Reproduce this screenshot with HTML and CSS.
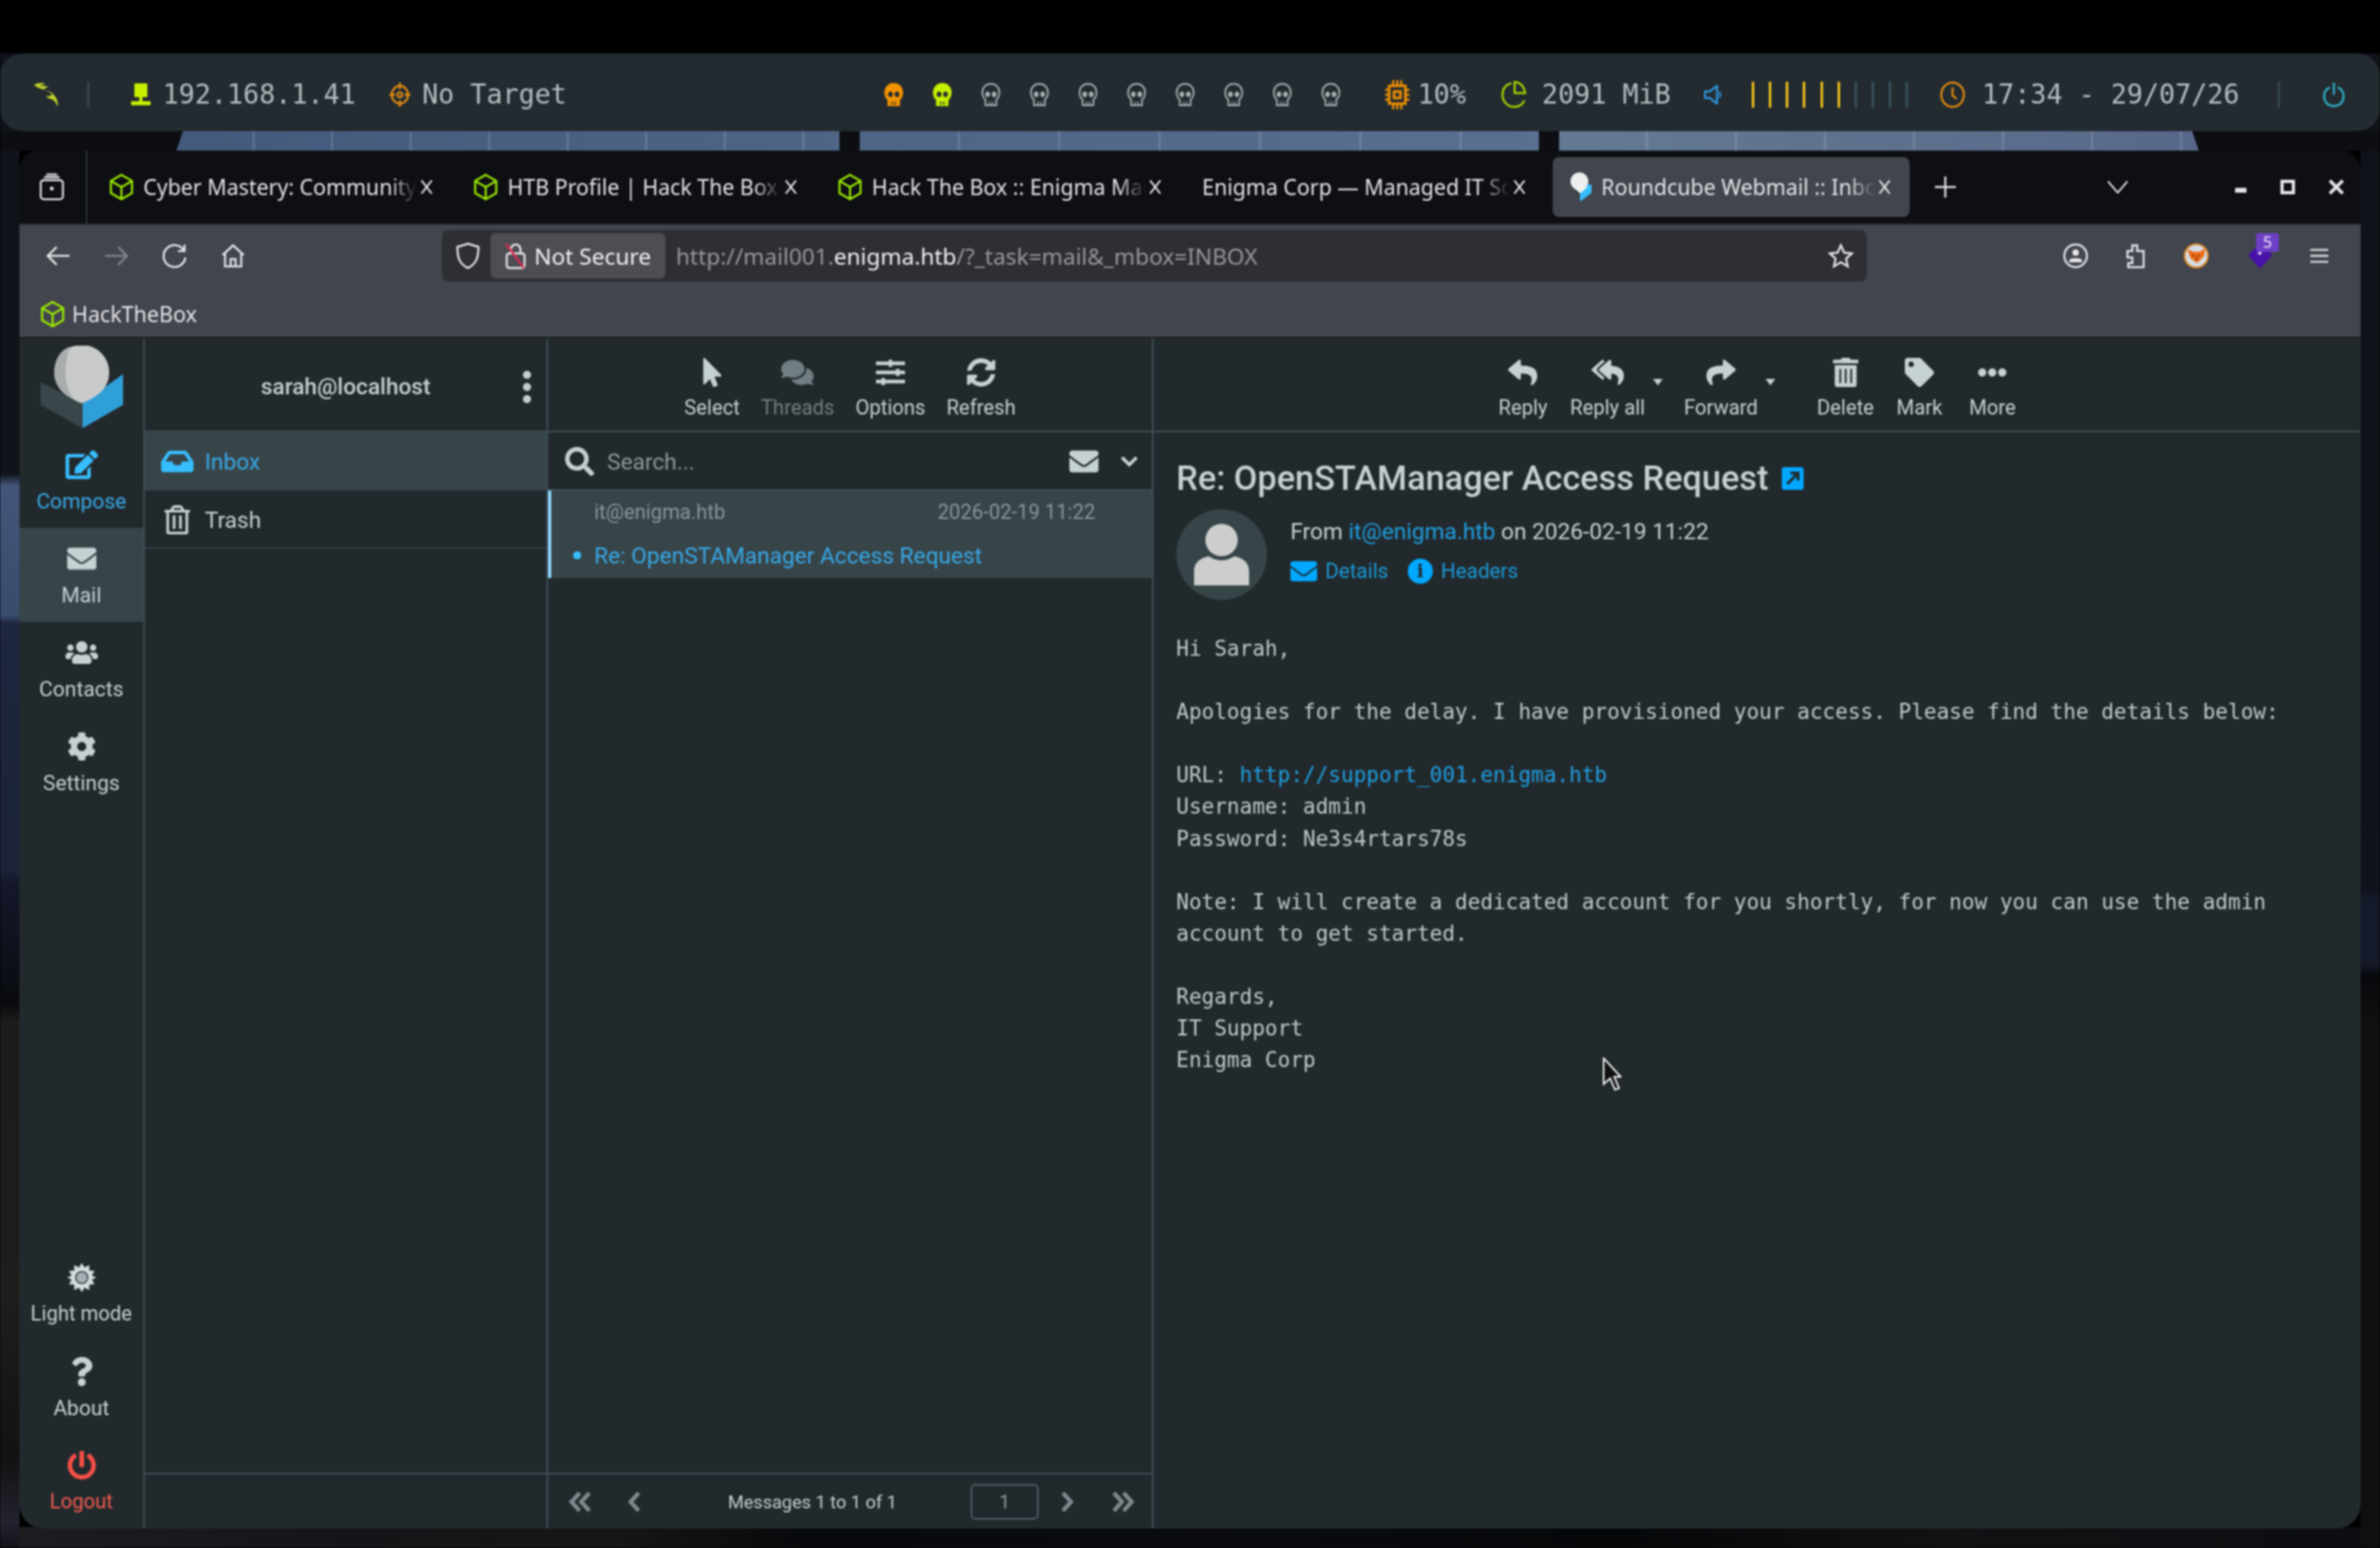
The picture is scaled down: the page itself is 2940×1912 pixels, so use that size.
FILE: index.html
```html
<!DOCTYPE html>
<html lang="en">
<head>
    <meta charset="UTF-8">
    <title>Roundcube Webmail :: Inbox</title>
    <link rel="stylesheet" href="styles.css">
</head>
<body>

<svg class="sprite" xmlns="http://www.w3.org/2000/svg">
    <symbol id="i-envelope" viewBox="0 0 512 512"><path d="M502.3 190.8c3.9-3.1 9.7-.2 9.7 4.7V400c0 26.5-21.5 48-48 48H48c-26.5 0-48-21.5-48-48V195.6c0-5 5.7-7.8 9.7-4.7 22.4 17.4 52.1 39.5 154.1 113.6 21.1 15.4 56.7 47.8 92.2 47.6 35.7.3 72-32.8 92.3-47.6 102-74.1 131.6-96.3 154-113.7zM256 320c23.2.4 56.6-29.2 73.4-41.4 132.7-96.3 142.8-104.7 173.4-128.7 5.8-4.5 9.2-11.5 9.2-18.9v-19c0-26.5-21.5-48-48-48H48C21.5 64 0 85.5 0 112v19c0 7.4 3.4 14.3 9.2 18.9 30.6 23.9 40.7 32.4 173.4 128.7 16.8 12.2 50.2 41.8 73.4 41.4z"/></symbol>
    <symbol id="i-cog" viewBox="0 0 512 512"><path d="M487.4 315.7l-42.6-24.6c4.3-23.2 4.3-47 0-70.2l42.6-24.6c4.9-2.8 7.1-8.6 5.5-14-11.1-35.6-30-67.8-54.7-94.6-3.8-4.1-10-5.1-14.8-2.3L380.8 110c-17.9-15.4-38.5-27.3-60.8-35.1V25.8c0-5.6-3.9-10.5-9.4-11.7-36.7-8.2-74.3-7.8-109.2 0-5.5 1.2-9.4 6.1-9.4 11.7V75c-22.2 7.9-42.8 19.8-60.8 35.1L88.7 85.5c-4.9-2.8-11-1.9-14.8 2.3-24.7 26.7-43.6 58.9-54.7 94.6-1.7 5.4.6 11.2 5.5 14L67.3 221c-4.3 23.2-4.3 47 0 70.2l-42.6 24.6c-4.9 2.8-7.1 8.6-5.5 14 11.1 35.6 30 67.8 54.7 94.6 3.8 4.1 10 5.1 14.8 2.3l42.6-24.6c17.9 15.4 38.5 27.3 60.8 35.1v49.2c0 5.6 3.9 10.5 9.4 11.7 36.7 8.2 74.3 7.8 109.2 0 5.5-1.2 9.4-6.1 9.4-11.7v-49.2c22.2-7.9 42.8-19.8 60.8-35.1l42.6 24.6c4.9 2.8 11 1.9 14.8-2.3 24.7-26.7 43.6-58.9 54.7-94.6 1.5-5.5-.7-11.3-5.6-14.1zM256 336c-44.1 0-80-35.9-80-80s35.9-80 80-80 80 35.9 80 80-35.9 80-80 80z"/></symbol>
    <symbol id="i-reply" viewBox="0 0 512 512"><path d="M8.309 189.836L184.313 37.851C199.719 24.546 224 35.347 224 56.015v80.053c160.629 1.839 288 34.032 288 186.258 0 61.441-39.581 122.309-83.333 154.132-13.653 9.931-33.111-2.533-28.077-18.631 45.344-145.012-21.507-183.51-176.59-185.742V360c0 20.7-24.3 31.453-39.687 18.164l-176.004-152c-11.071-9.562-11.086-26.753 0-36.328z"/></symbol>
    <symbol id="i-replyall" viewBox="0 0 576 512"><path d="M136.309 189.836L312.313 37.851C327.72 24.546 352 35.348 352 56.015v82.763c129.182 10.231 224 52.212 224 183.548 0 61.441-39.582 122.309-83.333 154.132-13.653 9.931-33.111-2.533-28.077-18.631 38.512-123.162-3.922-169.482-112.59-182.015v84.175c0 20.701-24.3 31.453-39.687 18.164L136.309 226.164c-11.071-9.561-11.086-26.753 0-36.328zm-128 36.328L184.313 378.15C199.7 391.439 224 380.687 224 359.986v-15.818l-108.606-93.785A55.96 55.96 0 0 1 96 207.998a55.953 55.953 0 0 1 19.393-42.38L224 71.832V56.015c0-20.667-24.28-31.469-39.687-18.164L8.309 189.836c-11.086 9.575-11.071 26.767 0 36.328z"/></symbol>
    <symbol id="i-forward" viewBox="0 0 512 512"><path d="M503.691 189.836L327.687 37.851C312.281 24.546 288 35.347 288 56.015v80.053C127.371 137.907 0 170.1 0 322.326c0 61.441 39.581 122.309 83.333 154.132 13.653 9.931 33.111-2.533 28.077-18.631C66.066 312.814 132.917 274.316 288 272.085V360c0 20.7 24.3 31.453 39.687 18.164l176.004-152c11.071-9.562 11.086-26.753 0-36.328z"/></symbol>
    <symbol id="i-trash" viewBox="0 0 448 512"><path d="M32 464a48 48 0 0 0 48 48h288a48 48 0 0 0 48-48V128H32zm272-256a16 16 0 0 1 32 0v224a16 16 0 0 1-32 0zm-96 0a16 16 0 0 1 32 0v224a16 16 0 0 1-32 0zm-96 0a16 16 0 0 1 32 0v224a16 16 0 0 1-32 0zM432 32H312l-9.4-18.7A24 24 0 0 0 281.1 0H166.8a23.72 23.72 0 0 0-21.4 13.3L136 32H16A16 16 0 0 0 0 48v32a16 16 0 0 0 16 16h416a16 16 0 0 0 16-16V48a16 16 0 0 0-16-16z"/></symbol>
    <symbol id="i-trash-line" viewBox="0 0 448 512"><path d="M268 416h24a12 12 0 0 0 12-12V188a12 12 0 0 0-12-12h-24a12 12 0 0 0-12 12v216a12 12 0 0 0 12 12zM432 80h-82.4l-34-56.7A48 48 0 0 0 274.4 0H173.6a48 48 0 0 0-41.2 23.3L98.4 80H16A16 16 0 0 0 0 96v16a16 16 0 0 0 16 16h16v336a48 48 0 0 0 48 48h288a48 48 0 0 0 48-48V128h16a16 16 0 0 0 16-16V96a16 16 0 0 0-16-16zM171.8 50.9A6 6 0 0 1 177 48h94a6 6 0 0 1 5.1 2.9L293.6 80H154.4zM368 464H80V128h288zm-212-48h24a12 12 0 0 0 12-12V188a12 12 0 0 0-12-12h-24a12 12 0 0 0-12 12v216a12 12 0 0 0 12 12z"/></symbol>
    <symbol id="i-tag" viewBox="0 0 512 512"><path d="M0 252.118V48C0 21.49 21.49 0 48 0h204.118a48 48 0 0 1 33.941 14.059l211.882 211.882c18.745 18.745 18.745 49.137 0 67.882L293.823 497.941c-18.745 18.745-49.137 18.745-67.882 0L14.059 286.059A48 48 0 0 1 0 252.118zM112 64c-26.51 0-48 21.49-48 48s21.49 48 48 48 48-21.49 48-48-21.49-48-48-48z"/></symbol>
    <symbol id="i-ellipsis" viewBox="0 0 512 512"><path d="M328 256c0 39.8-32.2 72-72 72s-72-32.2-72-72 32.2-72 72-72 72 32.2 72 72zm104-72c-39.8 0-72 32.2-72 72s32.2 72 72 72 72-32.2 72-72-32.2-72-72-72zm-352 0c-39.8 0-72 32.2-72 72s32.2 72 72 72 72-32.2 72-72-32.2-72-72-72z"/></symbol>
    <symbol id="i-pointer" viewBox="0 0 320 512"><path d="M302.189 329.126H196.105l55.831 135.993c3.889 9.428-.555 19.999-9.444 23.999l-49.165 21.427c-9.165 4-19.443-.571-23.332-9.714l-53.053-129.136-86.664 89.138C18.729 472.71 0 463.554 0 447.977V18.299C0 1.899 19.921-6.096 30.277 5.443l284.412 292.542c11.472 11.179 3.007 31.141-12.5 31.141z"/></symbol>
    <symbol id="i-comments" viewBox="0 0 576 512"><path d="M416 192c0-88.4-93.1-160-208-160S0 103.6 0 192c0 34.3 14.1 65.9 38 92-13.4 30.2-35.5 54.2-35.8 54.5-2.2 2.3-2.8 5.7-1.5 8.7S4.8 352 8 352c36.6 0 66.9-12.3 88.7-25 32.2 15.7 70.3 25 111.3 25 114.9 0 208-71.6 208-160zm122 220c23.9-26 38-57.7 38-92 0-66.9-53.5-124.2-129.3-148.1.9 6.6 1.3 13.3 1.3 20.1 0 105.9-107.7 192-240 192-10.8 0-21.3-.8-31.7-1.9C207.8 439.6 281.8 480 368 480c41 0 79.1-9.2 111.3-25 21.8 12.7 52.1 25 88.7 25 3.2 0 6.1-1.9 7.3-4.8 1.3-2.9.7-6.3-1.5-8.7-.3-.3-22.4-24.2-35.8-54.5z"/></symbol>
    <symbol id="i-sliders" viewBox="0 0 512 512"><path d="M496 384H160v-16c0-8.8-7.2-16-16-16h-32c-8.8 0-16 7.2-16 16v16H16c-8.8 0-16 7.2-16 16v32c0 8.8 7.2 16 16 16h80v16c0 8.8 7.2 16 16 16h32c8.8 0 16-7.2 16-16v-16h336c8.8 0 16-7.2 16-16v-32c0-8.8-7.2-16-16-16zm0-160h-80v-16c0-8.8-7.2-16-16-16h-32c-8.8 0-16 7.2-16 16v16H16c-8.8 0-16 7.2-16 16v32c0 8.8 7.2 16 16 16h336v16c0 8.8 7.2 16 16 16h32c8.8 0 16-7.2 16-16v-16h80c8.8 0 16-7.2 16-16v-32c0-8.8-7.2-16-16-16zm0-160H288V48c0-8.8-7.2-16-16-16h-32c-8.8 0-16 7.2-16 16v16H16C7.2 64 0 71.2 0 80v32c0 8.8 7.2 16 16 16h208v16c0 8.8 7.2 16 16 16h32c8.8 0 16-7.2 16-16v-16h208c8.8 0 16-7.2 16-16V80c0-8.8-7.2-16-16-16z"/></symbol>
    <symbol id="i-sync" viewBox="0 0 512 512"><path d="M370.72 133.28C339.458 104.008 298.888 87.962 255.848 88c-77.458.068-144.328 53.178-162.791 126.85-1.344 5.363-6.122 9.15-11.651 9.15H24.103c-7.498 0-13.194-6.807-11.807-14.176C33.933 94.924 134.813 8 256 8c66.448 0 126.791 26.136 171.315 68.685L463.03 40.97C478.149 25.851 504 36.559 504 57.941V192c0 13.255-10.745 24-24 24H345.941c-21.382 0-32.09-25.851-16.971-40.971l41.75-41.749zM32 296h134.059c21.382 0 32.09 25.851 16.971 40.971l-41.75 41.75c31.262 29.273 71.835 45.319 114.876 45.28 77.418-.07 144.315-53.144 162.787-126.849 1.344-5.363 6.122-9.15 11.651-9.15h57.304c7.498 0 13.194 6.807 11.807 14.176C478.067 417.076 377.187 504 256 504c-66.448 0-126.791-26.136-171.315-68.685L48.97 471.03C33.851 486.149 8 475.441 8 454.059V320c0-13.255 10.745-24 24-24z"/></symbol>
    <symbol id="i-search" viewBox="0 0 512 512"><path d="M505 442.7L405.3 343c-4.5-4.5-10.6-7-17-7H372c27.6-35.3 44-79.7 44-128C416 93.1 322.9 0 208 0S0 93.1 0 208s93.1 208 208 208c48.3 0 92.7-16.4 128-44v16.3c0 6.4 2.5 12.5 7 17l99.7 99.7c9.4 9.4 24.6 9.4 33.9 0l28.3-28.3c9.4-9.4 9.4-24.6.1-34zM208 336c-70.7 0-128-57.2-128-128 0-70.7 57.2-128 128-128 70.7 0 128 57.2 128 128 0 70.7-57.2 128-128 128z"/></symbol>
    <symbol id="i-users" viewBox="0 0 640 512"><path d="M96 224c35.3 0 64-28.7 64-64s-28.7-64-64-64-64 28.7-64 64 28.7 64 64 64zm448 0c35.3 0 64-28.7 64-64s-28.7-64-64-64-64 28.7-64 64 28.7 64 64 64zm32 32h-64c-17.6 0-33.5 7.1-45.1 18.6 40.3 22.1 68.9 62 75.1 109.4h66c17.7 0 32-14.3 32-32v-32c0-35.3-28.7-64-64-64zm-256 0c61.9 0 112-50.1 112-112S381.9 32 320 32 208 82.1 208 144s50.1 112 112 112zm76.8 32h-8.3c-20.8 10-43.9 16-68.5 16s-47.6-6-68.5-16h-8.3C179.6 288 128 339.6 128 403.2V432c0 26.5 21.5 48 48 48h288c26.5 0 48-21.5 48-48v-28.8c0-63.6-51.6-115.2-115.2-115.2zm-223.7-13.4C161.5 263.1 145.6 256 128 256H64c-35.3 0-64 28.7-64 64v32c0 17.7 14.3 32 32 32h65.9c6.3-47.4 34.9-87.3 75.2-109.4z"/></symbol>
    <symbol id="i-edit" viewBox="0 0 576 512"><path d="M402.6 83.2l90.2 90.2c3.8 3.8 3.8 10 0 13.8L274.4 405.6l-92.8 10.3c-12.4 1.4-22.9-9.1-21.5-21.5l10.3-92.8L388.8 83.2c3.8-3.8 10-3.8 13.8 0zm162-22.9l-48.8-48.8c-15.2-15.2-39.9-15.2-55.2 0l-35.4 35.4c-3.8 3.8-3.8 10 0 13.8l90.2 90.2c3.8 3.8 10 3.8 13.8 0l35.4-35.4c15.2-15.3 15.2-40 0-55.2zM384 346.2V448H64V128h231.8c3.2 0 6.2-1.3 8.5-3.5l40-40c7.6-7.6 2.2-20.5-8.5-20.5H48C21.5 64 0 85.5 0 112v352c0 26.5 21.5 48 48 48h352c26.5 0 48-21.5 48-48V306.2c0-10.7-12.9-16-20.5-8.5l-40 40c-2.2 2.3-3.5 5.3-3.5 8.5z"/></symbol>
    <symbol id="i-inbox" viewBox="0 0 576 512"><path d="M567.938 243.908L462.25 85.374A48.003 48.003 0 0 0 422.311 64H153.689a48 48 0 0 0-39.938 21.374L8.062 243.908A47.994 47.994 0 0 0 0 270.533V400c0 26.51 21.49 48 48 48h480c26.51 0 48-21.49 48-48V270.533a47.994 47.994 0 0 0-8.062-26.625zM162.252 128h251.497l85.333 128H376l-32 64H232l-32-64H76.918l85.334-128z"/></symbol>
    <symbol id="i-power" viewBox="0 0 512 512"><path d="M400 54.1c63 45 104 118.6 104 201.9 0 136.8-110.8 247.7-247.5 248C120 504.3 8.2 393 8 256.4 7.9 173.1 48.9 99.3 111.8 54.2c11.7-8.3 28-4.8 35 7.7L162.6 90c5.9 10.5 3.1 23.8-6.6 31-41.5 30.8-68 79.6-68 134.9-.1 92.3 74.5 168.1 168 168.1 91.6 0 168.6-74.2 168-169.1-.3-51.8-24.7-101.8-68.1-134-9.7-7.2-12.4-20.5-6.5-30.9l15.8-28.1c7-12.4 23.2-16.1 34.8-7.8zM296 264V24c0-13.3-10.7-24-24-24h-32c-13.3 0-24 10.7-24 24v240c0 13.3 10.7 24 24 24h32c13.3 0 24-10.7 24-24z"/></symbol>
    <symbol id="i-question" viewBox="0 0 384 512"><path d="M202.021 0C122.202 0 70.503 32.703 29.914 91.026c-7.363 10.58-5.093 25.086 5.178 32.874l43.138 32.709c10.373 7.865 25.132 6.026 33.253-4.148 25.049-31.381 43.63-49.449 82.757-49.449 30.764 0 68.816 19.799 68.816 49.631 0 22.552-18.617 34.134-48.993 51.164-35.423 19.86-82.299 44.576-82.299 106.405V320c0 13.255 10.745 24 24 24h72.471c13.255 0 24-10.745 24-24v-5.773c0-42.86 125.268-44.645 125.268-160.627C377.504 66.256 286.902 0 202.021 0zM192 373.459c-38.196 0-69.271 31.075-69.271 69.271 0 38.195 31.075 69.27 69.271 69.27s69.271-31.075 69.271-69.271-31.075-69.27-69.271-69.27z"/></symbol>
    <symbol id="i-sun" viewBox="0 0 40 40"><path d="M20 0l3.800 6 6.700-3.100-.3 7.300 7.300.7-3.500 6.400L40 20l-6 2.700 3.500 6.400-7.300.7.300 7.300-6.700-3.100L20 40l-3.800-6-6.700 3.100.3-7.300-7.300-.7L6 22.700 0 20l6-2.700-3.500-6.400 7.300-.7-.3-7.300 6.700 3.100z" fill="#d3dcde"/><circle cx="20" cy="20" r="9" fill="#22292c"/><circle cx="20" cy="20" r="7.500" fill="#a5b1b5"/></symbol>
    <symbol id="i-skull" viewBox="0 0 24 30"><path d="M12 1.500C5.600 1.500 1.500 6 1.500 12.500c0 3.800 1.400 6.600 3.800 8.600v6.900h13.400v-6.900c2.400-2 3.800-4.800 3.800-8.600C22.500 6 18.400 1.500 12 1.500z"/><ellipse class="skull-eye" cx="8" cy="14.500" rx="2.500" ry="3"/><ellipse class="skull-eye" cx="16" cy="14.500" rx="2.500" ry="3"/><path class="skull-eye" d="M9.500 23.500v4M12 23.500v4M14.500 23.500v4"/></symbol>
    <symbol id="i-cube" viewBox="0 0 30 34"><path d="M15 2l13 7.500v15L15 32 2 24.500v-15zM2 9.500l13 7.500 13-7.500M15 17v15"/></symbol>
    <symbol id="i-close" viewBox="0 0 20 24"><path d="M3 3l14 18M17 3L3 21"/></symbol>
</svg>

<div class="screen">
    <div class="panel">
        <svg class="dragon" viewBox="0 0 36 30"><path d="M0 3c5-3 10-3 14-1-3 0-5 1-7 3 4-2 8-1 11 1-3 0-5 1-6 3 5 0 10 3 13 7 3 3 4 6 4 8 0 2 1 4 0 6-1-4-3-7-6-9-3-1-7-2-8-5 3 1 6 1 7-1-2-3-5-5-9-6-5-1-9-3-13-6z"/></svg>
        <span class="bar-sep"></span>
        <svg class="panel-ic host-ic" viewBox="0 0 24 28"><path d="M4 0h16v17H4zM10 17h4v5h-4zM0 22h24v5H0z"/></svg>
        <span class="bar-text">192.168.1.41</span>
        <svg class="panel-ic target-ic" viewBox="0 0 26 30"><g fill="none" stroke="currentColor" stroke-width="2.500"><ellipse cx="13" cy="15" rx="10" ry="11"/><circle cx="13" cy="15" r="3"/><path d="M13 0v8M13 22v8M0 15h7M19 15h7"/></g></svg>
        <span class="bar-text">No Target</span>

        <div class="skulls">
            <svg class="skull skull-orange"><use href="#i-skull"/></svg>
            <svg class="skull skull-lime"><use href="#i-skull"/></svg>
            <svg class="skull"><use href="#i-skull"/></svg>
            <svg class="skull"><use href="#i-skull"/></svg>
            <svg class="skull"><use href="#i-skull"/></svg>
            <svg class="skull"><use href="#i-skull"/></svg>
            <svg class="skull"><use href="#i-skull"/></svg>
            <svg class="skull"><use href="#i-skull"/></svg>
            <svg class="skull"><use href="#i-skull"/></svg>
            <svg class="skull"><use href="#i-skull"/></svg>
        </div>

        <svg class="panel-ic cpu-ic" viewBox="0 0 30 36"><g fill="none" stroke="currentColor"><rect x="5" y="7" width="20" height="22" stroke-width="3"/><rect x="11" y="14" width="8" height="8" stroke-width="3"/><path d="M10 0v7M15 0v7M20 0v7M10 29v7M15 29v7M20 29v7M0 12h5M0 18h5M0 24h5M25 12h5M25 18h5M25 24h5" stroke-width="2.500"/></g></svg>
        <span class="bar-text">10%</span>
        <svg class="panel-ic mem-ic" viewBox="0 0 32 34"><g fill="none" stroke="currentColor" stroke-width="2.500"><path d="M13 3C6 4 2 10 2 17c0 8 6 15 14 15 6 0 11-3 13-8"/><path d="M17 1c7 1 12 6 13 14H17z"/></g></svg>
        <span class="bar-text">2091 MiB</span>
        <svg class="panel-ic vol-ic" viewBox="0 0 22 24"><path d="M1 8h6l9-7v22l-9-7H1z" fill="none" stroke="currentColor" stroke-width="2.500"/><path d="M19 8c1.500 3 1.500 5 0 8" fill="none" stroke="currentColor" stroke-width="2"/></svg>
        <div class="vol-bars">
            <span class="vbar on"></span><span class="vbar on"></span><span class="vbar on"></span>
            <span class="vbar on"></span><span class="vbar on"></span><span class="vbar on"></span>
            <span class="vbar"></span><span class="vbar"></span><span class="vbar"></span><span class="vbar"></span>
        </div>
        <svg class="panel-ic clock-ic" viewBox="0 0 32 34"><g fill="none" stroke="currentColor" stroke-width="2.500"><ellipse cx="16" cy="17" rx="14" ry="15"/><path d="M16 8v10l5 4"/></g></svg>
        <span class="bar-text">17:34 - 29/07/26</span>
        <span class="bar-sep sep-right"></span>
        <svg class="panel-ic power-ic" viewBox="0 0 28 32"><g fill="none" stroke="currentColor" stroke-width="2.500"><path d="M9 7C4 9 2 13 2 18c0 7 5 12 12 12s12-5 12-12c0-5-2-9-7-11"/><path d="M14 1v15"/></g></svg>
    </div>

    <div class="band">
        <span class="band-seg band-first"></span>
        <span class="band-seg band-mid"></span>
        <span class="band-seg band-last"></span>
    </div>

    <div class="browser">
        <div class="tabbar">
            <div class="tab-all">
                <svg class="tab-all-ic" viewBox="0 0 32 36"><g fill="none" stroke="#e6e6e8" stroke-width="2.500"><rect x="1.500" y="9" width="29" height="25" rx="4"/><path d="M6 5h20M9 1.500h14"/></g><circle cx="16" cy="20" r="2.500" fill="#e6e6e8"/></svg>
            </div>
            <div class="tab">
                <svg class="tab-cube"><use href="#i-cube"/></svg>
                <span class="tab-title">Cyber Mastery: Community</span>
                <svg class="tab-x"><use href="#i-close"/></svg>
            </div>
            <div class="tab">
                <svg class="tab-cube"><use href="#i-cube"/></svg>
                <span class="tab-title">HTB Profile | Hack The Box</span>
                <svg class="tab-x"><use href="#i-close"/></svg>
            </div>
            <div class="tab">
                <svg class="tab-cube"><use href="#i-cube"/></svg>
                <span class="tab-title">Hack The Box :: Enigma Machine</span>
                <svg class="tab-x"><use href="#i-close"/></svg>
            </div>
            <div class="tab">
                <span class="tab-title">Enigma Corp — Managed IT Solutions</span>
                <svg class="tab-x"><use href="#i-close"/></svg>
            </div>
            <div class="tab tab-active">
                <svg class="tab-rc" viewBox="0 0 30 36"><path d="M15 36l14-11V15H14z" fill="#37beff"/><path d="M3 18l12 10V20z" fill="#2e3a40"/><ellipse cx="14" cy="11" rx="11" ry="11" fill="#eef0f0"/><path d="M6 18l9 8 9-8z" fill="#eef0f0"/></svg>
                <span class="tab-title">Roundcube Webmail :: Inbox</span>
                <svg class="tab-x"><use href="#i-close"/></svg>
            </div>
            <svg class="tab-plus" viewBox="0 0 26 26"><path d="M13 0v26M0 13h26"/></svg>
            <svg class="tab-list" viewBox="0 0 26 16"><path d="M1 1l12 14L25 1"/></svg>
            <svg class="win-min" viewBox="0 0 14 14"><rect x="0" y="8" width="14" height="6"/></svg>
            <svg class="win-max" viewBox="0 0 18 18"><rect x="2" y="2" width="14" height="14"/></svg>
            <svg class="win-close" viewBox="0 0 20 20"><path d="M2 2l16 16M18 2L2 18"/></svg>
        </div>

        <div class="toolbox">
            <div class="navrow">
                <svg class="nav-ic" viewBox="0 0 32 32"><path d="M30 16H4M14 5L3 16l11 11"/></svg>
                <svg class="nav-ic nav-off" viewBox="0 0 32 32"><path d="M2 16h26M18 5l11 11-11 11"/></svg>
                <svg class="nav-ic" viewBox="0 0 32 32"><path d="M27 9A13.500 13.500 0 1 0 29 18M28 2v8h-8"/></svg>
                <svg class="nav-ic" viewBox="0 0 32 32"><path d="M3 15L16 3l13 12M6 13v16h20V13M13 29v-9h6v9"/></svg>

                <div class="urlbar">
                    <svg class="url-shield" viewBox="0 0 30 34"><path d="M15 2l13 4c0 12-2 21-13 26C4 27 2 18 2 6z"/></svg>
                    <div class="url-chip">
                        <svg class="url-lock" viewBox="0 0 28 34"><g fill="none" stroke="#e6e6e8" stroke-width="2.500"><rect x="3" y="14" width="22" height="18" rx="3"/><path d="M8 14V9a6 6 0 0 1 12 0v5"/></g><path d="M2 2l22 30" stroke="#e22850" stroke-width="2.500"/></svg>
                        <span>Not Secure</span>
                    </div>
                    <span class="url-text">http://mail001.<b>enigma.htb</b>/?_task=mail&amp;_mbox=INBOX</span>
                    <svg class="url-star" viewBox="0 0 32 32"><path d="M16 3l4 9 9.500 1-7 6.500 2 9.500-8.500-5-8.500 5 2-9.500-7-6.500L12 12z"/></svg>
                </div>

                <svg class="nav-ic profile-ic" viewBox="0 0 32 32"><circle cx="16" cy="16" r="14"/><circle cx="16" cy="12" r="4" class="nav-fill"/><path d="M8 24h16v-2a5 5 0 0 0-5-3h-6a5 5 0 0 0-5 3z" class="nav-fill"/></svg>
                <svg class="nav-ic puzzle-ic" viewBox="0 0 32 32"><path d="M13 3h6v7h8v20H8v-5h5v-7H7v-8h6z"/></svg>
                <svg class="fox-ic" viewBox="0 0 32 32"><circle cx="16" cy="16" r="14.500" fill="#d5dde2" stroke="#d9821f" stroke-width="2"/><path d="M5 8l8 3h7l7-4-1 9-9 9-8-6z" fill="#ef6c17"/><path d="M11 15l3 2M20 15l-3 2M15 20h3" stroke="#66310c" stroke-width="1.500"/></svg>
                <div class="ext-purple">
                    <svg class="ext-gem" viewBox="0 0 32 32"><path d="M16 0l15 15-15 17L1 15z" fill="#4811a8"/><path d="M12 13l6-3-1 5z" fill="#e9e4f6"/></svg>
                    <span class="ext-badge">5</span>
                </div>
                <svg class="nav-ic menu-ic" viewBox="0 0 28 28"><path d="M2 6h24M2 14h24M2 22h24"/></svg>
            </div>
            <div class="bookmarks">
                <svg class="tab-cube"><use href="#i-cube"/></svg>
                <span>HackTheBox</span>
            </div>
        </div>

        <div class="app">
            <div class="side">
                <div class="side-logo">
                    <svg class="rc-logo" viewBox="0 0 102 102">
                        <path d="M0 45l52 26v31L0 73z" fill="#39464a"/>
                        <path d="M52 71l50-36v38l-50 29z" fill="#2f9fd8"/>
                        <circle cx="51" cy="33" r="34" fill="#c9cbca"/>
                        <path d="M21 48c8 12 20 20 30 23 10-3 22-11 30-23z" fill="#c9cbca"/>
                        <path d="M37 1C24 5 17 18 17 33c0 9 3 15 8 21 5 5 10 9 16 12-7-10-10-20-10-32C31 21 33 9 37 1z" fill="#a9acac"/>
                    </svg>
                </div>
                <a class="side-item side-blue"><svg class="side-ic"><use href="#i-edit"/></svg><span>Compose</span></a>
                <a class="side-item side-active"><svg class="side-ic"><use href="#i-envelope"/></svg><span>Mail</span></a>
                <a class="side-item"><svg class="side-ic"><use href="#i-users"/></svg><span>Contacts</span></a>
                <a class="side-item"><svg class="side-ic"><use href="#i-cog"/></svg><span>Settings</span></a>
                <a class="side-item side-push"><svg class="side-ic"><use href="#i-sun"/></svg><span>Light mode</span></a>
                <a class="side-item"><svg class="side-ic"><use href="#i-question"/></svg><span>About</span></a>
                <a class="side-item side-red"><svg class="side-ic"><use href="#i-power"/></svg><span>Logout</span></a>
            </div>

            <div class="folders">
                <div class="folders-head">
                    <span></span>
                    <span class="account">sarah@localhost</span>
                    <span class="dots"><i></i><i></i><i></i></span>
                </div>
                <div class="folder folder-active">
                    <svg class="folder-ic"><use href="#i-inbox"/></svg>
                    <span>Inbox</span>
                </div>
                <div class="folder">
                    <svg class="folder-ic folder-trash"><use href="#i-trash-line"/></svg>
                    <span>Trash</span>
                </div>
                <div class="col-fill"></div>
                <div class="col-foot"></div>
            </div>

            <div class="list">
                <div class="tools">
                    <a class="tool"><svg class="tool-ic"><use href="#i-pointer"/></svg><span>Select</span></a>
                    <a class="tool tool-off"><svg class="tool-ic"><use href="#i-comments"/></svg><span>Threads</span></a>
                    <a class="tool"><svg class="tool-ic"><use href="#i-sliders"/></svg><span>Options</span></a>
                    <a class="tool"><svg class="tool-ic"><use href="#i-sync"/></svg><span>Refresh</span></a>
                </div>
                <div class="search">
                    <svg class="search-ic"><use href="#i-search"/></svg>
                    <span class="search-text">Search...</span>
                    <svg class="search-mail"><use href="#i-envelope"/></svg>
                    <svg class="search-caret" viewBox="0 0 24 16"><path d="M3 3l9 9 9-9"/></svg>
                </div>
                <div class="msg">
                    <div class="msg-top">
                        <span>it@enigma.htb</span>
                        <span>2026-02-19 11:22</span>
                    </div>
                    <div class="msg-subject">
                        <i class="msg-dot"></i>
                        <span>Re: OpenSTAManager Access Request</span>
                    </div>
                </div>
                <div class="col-fill"></div>
                <div class="col-foot pager">
                    <svg class="page-ic page-first" viewBox="0 0 28 28"><path d="M13 3L3 14l10 11M25 3L15 14l10 11"/></svg>
                    <svg class="page-ic page-prev" viewBox="0 0 16 28"><path d="M13 3L3 14l10 11"/></svg>
                    <span class="page-count">Messages 1 to 1 of 1</span>
                    <span class="page-input">1</span>
                    <svg class="page-ic page-next" viewBox="0 0 16 28"><path d="M3 3l10 11L3 25"/></svg>
                    <svg class="page-ic page-last" viewBox="0 0 28 28"><path d="M3 3l10 11L3 25M15 3l10 11-10 11"/></svg>
                </div>
            </div>

            <div class="content">
                <div class="tools tools-mail">
                    <a class="tool"><svg class="tool-ic"><use href="#i-reply"/></svg><span>Reply</span></a>
                    <a class="tool tool-drop"><svg class="tool-ic"><use href="#i-replyall"/></svg><span>Reply all</span></a>
                    <a class="tool tool-drop"><svg class="tool-ic"><use href="#i-forward"/></svg><span>Forward</span></a>
                    <a class="tool tool-gap"><svg class="tool-ic"><use href="#i-trash"/></svg><span>Delete</span></a>
                    <a class="tool"><svg class="tool-ic"><use href="#i-tag"/></svg><span>Mark</span></a>
                    <a class="tool tool-more"><svg class="tool-ic"><use href="#i-ellipsis"/></svg><span>More</span></a>
                </div>
                <div class="mail">
                    <h1 class="mail-title">Re: OpenSTAManager Access Request
                        <span class="open-ext"><svg viewBox="0 0 20 20"><path d="M5 15L15 5M8 5h7v7"/></svg></span>
                    </h1>
                    <div class="mail-head">
                        <div class="avatar">
                            <svg viewBox="0 0 112 112"><circle cx="56" cy="38" r="20" fill="#cdcdcd"/><path d="M22 94V76c0-10 8-16 18-18 5 3 10 5 16 5s11-2 16-5c10 2 18 8 18 18v18z" fill="#cdcdcd"/></svg>
                        </div>
                        <div class="mail-meta">
                            <div class="mail-from">From <a>it@enigma.htb</a> on 2026-02-19 11:22</div>
                            <div class="mail-links">
                                <svg class="meta-ic"><use href="#i-envelope"/></svg>
                                <a>Details</a>
                                <span class="info-ic">i</span>
                                <a>Headers</a>
                            </div>
                        </div>
                    </div>
                    <pre class="mail-body">Hi Sarah,

Apologies for the delay. I have provisioned your access. Please find the details below:

URL: <a>http://support_001.enigma.htb</a>
Username: admin
Password: Ne3s4rtars78s

Note: I will create a dedicated account for you shortly, for now you can use the admin
account to get started.

Regards,
IT Support
Enigma Corp</pre>
                </div>
                <svg class="mouse" viewBox="0 0 24 42"><path d="M2 1v32l8-7 6 14 5-2-6-14h8z"/></svg>
            </div>
        </div>
    </div>
</div>

</body>
</html>
```

FILE: styles.css
```css
* {
    box-sizing: border-box;
}
html, body {
    margin: 0;
    padding: 0;
    background-color: #000;
}
.sprite {
    display: none;
}
svg {
    display: block;
    flex: none;
}
a {
    color: inherit;
    text-decoration: none;
}

/* wallpaper only shows on the margins round the browser */
.screen {
    width: 2940px;
    height: 1912px;
    overflow: hidden;
    padding-top: 66px;
    filter: blur(0.8px);
    background-color: #000;
    background-image:
        linear-gradient(to bottom, #000 0, #000 66px, #10131a 66px, #10131a 585px, #43567a 600px, #3a4c6c 760px, #1e2740 770px, #1c2338 1075px, #14182a 1090px, #0a0b10 1240px, #1c1c1b 1262px, #1e1e1c 1600px, #121212 1800px, #232330 1880px, #12121a 1912px),
        linear-gradient(to bottom, #000 0, #000 66px, #101219 66px, #10121c 1100px, #151a2a 1110px, #151a2a 1190px, #08090c 1205px, #0f0f10 1260px, #0f0f10 1912px),
        linear-gradient(to right, #1d1d22 0, #15151a 400px, #181614 760px, #07090c 1000px, #0a0c10 1500px, #050709 2000px, #141114 2400px, #0c0e12 2940px);
    background-size: 24px 100%, 24px 100%, 100% 26px;
    background-position: left top, right top, left bottom;
    background-repeat: no-repeat;
}

/* desktop panel */
.panel {
    height: 96px;
    display: flex;
    align-items: center;
    padding: 6px 0 0 42px;
    background-color: #232b30;
    border-radius: 28px;
    font-family: "DejaVu Sans Mono", monospace;
}
.bar-text {
    font-size: 33px;
    line-height: 40px;
    color: #b4bcc0;
    white-space: nowrap;
}
.dragon {
    width: 36px;
    height: 30px;
    fill: #c2d62c;
}
.bar-sep {
    width: 2px;
    height: 32px;
    margin-left: 30px;
    background-color: #3d4f58;
}
.panel-ic {
    height: 30px;
}
.host-ic {
    width: 24px;
    margin-left: 52px;
    margin-right: 15px;
    fill: #c6f000;
}
.target-ic {
    width: 26px;
    margin-left: 42px;
    margin-right: 14px;
    color: #e08c10;
}
.skulls {
    display: flex;
    gap: 36px;
    margin-left: 392px;
}
.skull {
    --eye: #aab2b5;
    width: 24px;
    height: 30px;
    fill: none;
    stroke: #aab2b5;
    stroke-width: 2;
}
.skull-eye {
    fill: var(--eye);
    stroke: var(--eye);
    stroke-width: 1;
}
.skull-orange {
    --eye: #232b30;
    fill: #f59300;
    stroke: #f59300;
}
.skull-lime {
    --eye: #232b30;
    fill: #c6f000;
    stroke: #c6f000;
}
.cpu-ic {
    width: 30px;
    height: 36px;
    margin-left: 55px;
    margin-right: 10px;
    color: #f59300;
}
.mem-ic {
    width: 32px;
    height: 34px;
    margin-left: 43px;
    margin-right: 19px;
    color: #a4d800;
}
.vol-ic {
    width: 22px;
    height: 24px;
    margin-left: 41px;
    color: #2f96e0;
}
.vol-bars {
    display: flex;
    gap: 18.2px;
    margin-left: 37px;
}
.vbar {
    width: 3px;
    height: 32px;
    background-color: #36505e;
}
.vbar.on {
    background-color: #f5c518;
}
.clock-ic {
    width: 32px;
    height: 34px;
    margin-left: 39px;
    margin-right: 20px;
    color: #e08c10;
}
.sep-right {
    margin-left: 48px;
}
.power-ic {
    width: 28px;
    height: 32px;
    margin-left: 53px;
    color: #2fb3cc;
}

/* strip of wallpaper between the panel and the browser */
.band {
    height: 24px;
    display: flex;
    gap: 25px;
    padding-left: 218px;
    background-color: #0c0e13;
}
.band-seg {
    display: block;
    height: 24px;
}
.band-first {
    width: 819px;
    background:
        repeating-linear-gradient(to right, transparent 0, transparent 94px, rgba(210, 220, 235, 0.3) 95px, transparent 97px),
        linear-gradient(to right, #445a7c, #4f6585);
    clip-path: polygon(8px 0, 100% 0, 100% 100%, 0 100%);
}
.band-mid {
    width: 839px;
    background:
        repeating-linear-gradient(to right, transparent 0, transparent 121px, rgba(210, 220, 235, 0.3) 122px, transparent 124px),
        linear-gradient(to right, #4f6585, #5a7090);
}
.band-last {
    width: 790px;
    background:
        repeating-linear-gradient(to right, transparent 0, transparent 107px, rgba(210, 220, 235, 0.3) 108px, transparent 110px),
        linear-gradient(to right, #647a92, #58688a);
    clip-path: polygon(0 0, calc(100% - 8px) 0, 100% 100%, 0 100%);
}

/* browser window */
.browser {
    width: 2892px;
    height: 1702px;
    margin-left: 24px;
    background-color: #0d0f13;
    border-radius: 24px 24px 30px 30px;
    overflow: hidden;
    font-family: "Noto Sans", sans-serif;
}
.tabbar {
    height: 90px;
    display: flex;
    align-items: center;
}
.tab-all {
    width: 84px;
    height: 90px;
    flex: none;
    border-right: 2px solid #2c3035;
    display: flex;
    align-items: center;
    padding-left: 23px;
}
.tab-all-ic {
    width: 34px;
    height: 34px;
}
.tab {
    width: 450px;
    height: 74px;
    flex: none;
    display: flex;
    align-items: center;
    gap: 12px;
    padding: 0 32px 0 17px;
    color: #e4e4e8;
    font-size: 26.4px;
}
.tab-all + .tab {
    margin-left: 10px;
}
.tab-cube {
    width: 30px;
    height: 34px;
    fill: none;
    stroke: #9fef00;
    stroke-width: 2.5;
}
.tab-title {
    flex: 1;
    min-width: 0;
    white-space: nowrap;
    overflow: hidden;
    -webkit-mask-image: linear-gradient(to right, #000 90%, transparent 100%);
    mask-image: linear-gradient(to right, #000 90%, transparent 100%);
}
.tab-x {
    width: 18px;
    height: 22px;
    margin-left: -9px;
    fill: none;
    stroke: #e4e4e8;
    stroke-width: 2.5;
}
.tab-active {
    width: 441px;
    padding: 0 22px 0 19px;
    background-color: #42454d;
    border-radius: 8px;
    gap: 11px;
}
.tab-rc {
    width: 30px;
    height: 36px;
}
.tab-plus {
    width: 26px;
    height: 26px;
    margin-left: 31px;
    fill: none;
    stroke: #e4e4e8;
    stroke-width: 2.5;
}
.tab-list {
    width: 26px;
    height: 16px;
    margin-left: 187px;
    fill: none;
    stroke: #e4e4e8;
    stroke-width: 2;
}
.win-min {
    width: 14px;
    height: 14px;
    margin-left: 132px;
    fill: #e4e4e8;
}
.win-max {
    width: 18px;
    height: 18px;
    margin-left: 42px;
    fill: none;
    stroke: #e4e4e8;
    stroke-width: 4;
}
.win-close {
    width: 20px;
    height: 20px;
    margin-left: 41px;
    fill: none;
    stroke: #e4e4e8;
    stroke-width: 4;
}

.toolbox {
    height: 142px;
    background-color: #42454d;
    border-top: 2px solid #2a2c31;
    border-bottom: 2px solid #1b1d20;
}
.navrow {
    height: 76px;
    display: flex;
    align-items: center;
    padding-left: 32px;
}
.nav-ic {
    width: 32px;
    height: 32px;
    margin-right: 40px;
    fill: none;
    stroke: #e4e4e8;
    stroke-width: 2.5;
}
.nav-off {
    stroke: #82858c;
}
.nav-fill {
    fill: #e4e4e8;
    stroke: none;
}
.urlbar {
    width: 1760px;
    height: 64px;
    margin-left: 202px;
    display: flex;
    align-items: center;
    padding: 0 16px 0 17px;
    background-color: #2e2f34;
    border-radius: 8px;
    font-size: 28px;
}
.url-shield {
    width: 30px;
    height: 34px;
    fill: none;
    stroke: #e4e4e8;
    stroke-width: 2.5;
}
.url-chip {
    width: 216px;
    height: 56px;
    margin-left: 13px;
    display: flex;
    align-items: center;
    gap: 9px;
    padding-left: 17px;
    background-color: #4d4e54;
    border-radius: 6px;
    color: #f0f0f2;
}
.url-lock {
    width: 28px;
    height: 34px;
}
.url-text {
    flex: 1;
    margin-left: 13px;
    color: #96979c;
}
.url-text b {
    font-weight: 400;
    color: #f0f0f2;
}
.url-star {
    width: 32px;
    height: 32px;
    fill: none;
    stroke: #e4e4e8;
    stroke-width: 2.5;
}
.profile-ic {
    margin-left: 242px;
    margin-right: 41px;
}
.puzzle-ic {
    margin-right: 44px;
}
.fox-ic {
    width: 32px;
    height: 32px;
    margin-right: 47px;
}
.ext-purple {
    width: 32px;
    height: 32px;
    position: relative;
    margin-right: 44px;
}
.ext-gem {
    width: 32px;
    height: 32px;
}
.ext-badge {
    position: absolute;
    left: 11px;
    top: -12px;
    width: 28px;
    height: 23px;
    line-height: 22px;
    background-color: #6d3fc6;
    border-radius: 3px;
    color: #e9e4f6;
    font-size: 20px;
    text-align: center;
}
.menu-ic {
    width: 26px;
    height: 26px;
    margin-right: 0;
}
.bookmarks {
    height: 62px;
    display: flex;
    align-items: center;
    gap: 9px;
    padding: 6px 0 0 26px;
    font-size: 26.5px;
    color: #e4e4e8;
}

/* roundcube */
.app {
    height: 1470px;
    display: flex;
    background-color: #22292c;
    color: #c5cfd1;
    font-family: Roboto, sans-serif;
}
.side {
    width: 155px;
    display: flex;
    flex-direction: column;
    border-right: 2px solid #3e4f57;
}
.side-logo {
    height: 118px;
    padding: 9px 0 0 26px;
}
.rc-logo {
    width: 102px;
    height: 102px;
}
.side-item {
    height: 116px;
    flex: none;
    display: flex;
    flex-direction: column;
    align-items: center;
    padding-top: 20px;
    font-size: 26px;
    line-height: 34px;
}
.side-item span {
    margin-top: 10px;
}
.side-ic {
    width: 40px;
    height: 36px;
    fill: #c5d1d3;
}
.side-blue {
    color: #37a8e6;
}
.side-blue .side-ic {
    fill: #37beff;
}
.side-active {
    background-color: #374549;
}
.side-push {
    margin-top: auto;
    font-size: 25px;
}
.side-red {
    font-size: 25px;
    color: #f05a50;
}
.side-red .side-ic {
    fill: #f44f45;
}

.folders {
    width: 498px;
    display: flex;
    flex-direction: column;
    border-right: 2px solid #3e4f57;
}
.folders-head {
    height: 116px;
    flex: none;
    display: grid;
    grid-template-columns: 1fr auto 1fr;
    align-items: center;
    padding-top: 5px;
    border-bottom: 2px solid #3e4f57;
    font-size: 28px;
    font-weight: 500;
}
.dots {
    justify-self: end;
    padding-right: 19px;
    display: flex;
    flex-direction: column;
    gap: 5px;
}
.dots i {
    width: 10px;
    height: 10px;
    border-radius: 50%;
    background-color: #c5cfd1;
}
.folder {
    height: 72px;
    flex: none;
    display: flex;
    align-items: center;
    gap: 14px;
    padding: 2px 0 0 20px;
    border-bottom: 2px solid #323f45;
    font-size: 28px;
}
.folder-ic {
    width: 40px;
    height: 36px;
    fill: #c5cfd1;
}
.folder-active {
    background-color: #374549;
    color: #37a8e6;
}
.folder-active .folder-ic {
    fill: #37beff;
}
.col-fill {
    flex: 1;
}
.col-foot {
    height: 69px;
    flex: none;
    border-top: 2px solid #3e4f57;
}

.list {
    width: 748px;
    display: flex;
    flex-direction: column;
    border-right: 2px solid #3e4f57;
}
.tools {
    height: 116px;
    flex: none;
    display: flex;
    justify-content: center;
    gap: 26px;
    padding-top: 24px;
    border-bottom: 2px solid #3e4f57;
    font-size: 25px;
}
.tools-mail {
    gap: 28px;
}
.tool {
    display: flex;
    flex-direction: column;
    align-items: center;
}
.tool span {
    margin-top: 9px;
    line-height: 34px;
}
.tool-ic {
    width: 40px;
    height: 36px;
    fill: #c5d1d3;
}
.tool-off {
    color: #717e82;
}
.tool-off .tool-ic {
    fill: #717e82;
}
.tool-drop {
    position: relative;
    margin-right: 20px;
}
.tool-drop::after {
    content: "";
    position: absolute;
    right: -22px;
    top: 26px;
    border-style: solid;
    border-width: 8px 6px 0;
    border-color: #c5d1d3 transparent transparent;
}
.tool-gap {
    margin-left: 25px;
}
.tool-more {
    margin-left: 5px;
}

.search {
    height: 72px;
    flex: none;
    display: flex;
    align-items: center;
    padding: 2px 0 0 21px;
    border-bottom: 2px solid #3e4f57;
    font-size: 28px;
}
.search-ic {
    width: 36px;
    height: 36px;
    fill: #c5cfd1;
}
.search-text {
    flex: 1;
    margin-left: 16px;
    color: #8b979a;
}
.search-mail {
    width: 36px;
    height: 36px;
    fill: #c5d1d3;
}
.search-caret {
    width: 24px;
    height: 16px;
    margin: 0 16px 0 26px;
    fill: none;
    stroke: #c5d1d3;
    stroke-width: 4;
}
.msg {
    height: 108px;
    flex: none;
    background-color: #374549;
    border-left: 4px solid #8ed6ff;
    padding-left: 53px;
    padding-right: 70px;
}
.msg-top {
    height: 52px;
    display: flex;
    align-items: center;
    justify-content: space-between;
    color: #88969a;
    font-size: 25px;
}
.msg-subject {
    height: 56px;
    display: flex;
    align-items: center;
    color: #37a8e6;
    font-size: 28px;
    position: relative;
    white-space: nowrap;
}
.msg-dot {
    position: absolute;
    left: -26px;
    top: 23px;
    width: 10px;
    height: 10px;
    border-radius: 50%;
    background-color: #37beff;
}
.pager {
    display: flex;
    align-items: center;
    padding-left: 26px;
    font-size: 22.4px;
}
.page-ic {
    height: 28px;
    fill: none;
    stroke: #7d898d;
    stroke-width: 5;
}
.page-first, .page-last {
    width: 28px;
}
.page-prev, .page-next {
    width: 16px;
}
.page-prev {
    margin-left: 45px;
}
.page-count {
    width: 407px;
    text-align: center;
    padding-left: 16px;
}
.page-input {
    width: 84px;
    height: 44px;
    line-height: 40px;
    text-align: center;
    font-size: 24px;
    color: #8b979a;
    border: 2px solid #4c5f68;
    border-radius: 6px;
}
.page-next {
    margin-left: 27px;
}
.page-last {
    margin-left: 47px;
}

.content {
    flex: 1;
    position: relative;
}
.mail {
    padding: 29px 28px 0;
}
.mail-title {
    display: flex;
    align-items: center;
    gap: 16px;
    margin: 0 0 10px;
    font-size: 42.4px;
    line-height: 56px;
    font-weight: 500;
    color: #c5d1d3;
}
.open-ext {
    width: 27px;
    height: 28px;
    background-color: #00a8ff;
    border-radius: 3px;
}
.open-ext svg {
    width: 27px;
    height: 28px;
    fill: none;
    stroke: #22292c;
    stroke-width: 2.5;
}
.mail-head {
    display: flex;
    gap: 28px;
}
.avatar {
    width: 112px;
    height: 112px;
    border-radius: 50%;
    background-color: #374549;
}
.mail-meta {
    padding: 8px 0 0 1px;
    font-size: 28px;
    line-height: 40px;
}
.mail-from a {
    color: #1f9ee0;
}
.mail-links {
    display: flex;
    align-items: center;
    margin-top: 8px;
    font-size: 25.5px;
    color: #1899d6;
}
.meta-ic {
    width: 33px;
    height: 33px;
    margin-right: 10px;
    fill: #00a8ff;
}
.info-ic {
    width: 31px;
    height: 31px;
    margin: 0 10px 0 24px;
    border-radius: 50%;
    background-color: #00a8ff;
    color: #22292c;
    text-align: center;
    line-height: 31px;
    font-weight: 700;
    font-family: "DejaVu Serif", serif;
    font-size: 22px;
}
.mail-body {
    margin: 41px 0 0;
    font-family: "DejaVu Sans Mono", monospace;
    font-size: 26px;
    line-height: 39.1px;
    color: #bfc8cb;
}
.mail-body a {
    color: #1f9ee0;
}
.mouse {
    position: absolute;
    left: 554px;
    top: 888px;
    width: 24px;
    height: 42px;
    fill: #111;
    stroke: #f2f2f2;
    stroke-width: 2;
}
```
